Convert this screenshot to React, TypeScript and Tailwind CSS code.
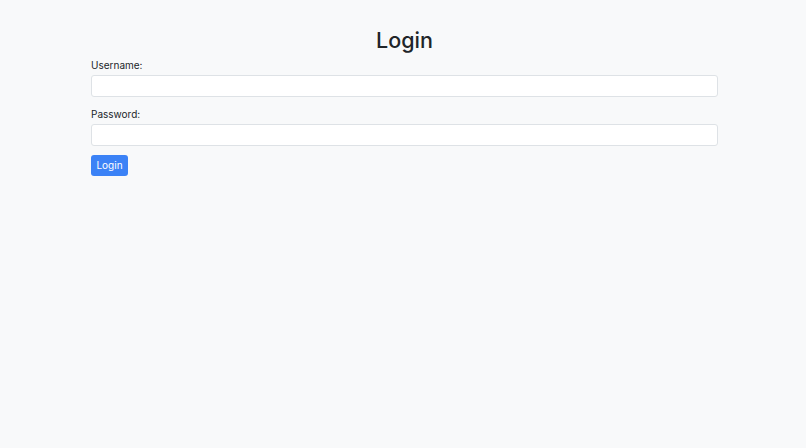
import React from "react";

export default function App() {
  return (
    <div className="min-h-[448px] w-full bg-[#f8f9fa] font-['Inter',sans-serif] text-[#212529]">
      <div className="ml-[91px] w-[627px] pt-[25px]">
        <h1 className="text-center text-[21.5px] leading-[30px] font-medium text-[#212529]">Login</h1>
        <form className="mt-[3px] flex flex-col items-start" onSubmit={(e) => e.preventDefault()}>
          <label className="text-[10px] leading-[14px] text-[#212529]">Username:</label>
          <input type="text" className="mt-[3px] h-[22px] w-full rounded-[3px] border border-[#dee2e6] bg-white outline-none" />
          <label className="mt-[10px] text-[10px] leading-[14px] text-[#212529]">Password:</label>
          <input type="password" className="mt-[3px] h-[22px] w-full rounded-[3px] border border-[#dee2e6] bg-white outline-none" />
          <button type="submit" className="mt-[9px] h-[21px] w-[37px] rounded-[3px] bg-[#3b82f6] text-[10px] leading-[21px] text-white">Login</button>
        </form>
      </div>
    </div>
  );
}
